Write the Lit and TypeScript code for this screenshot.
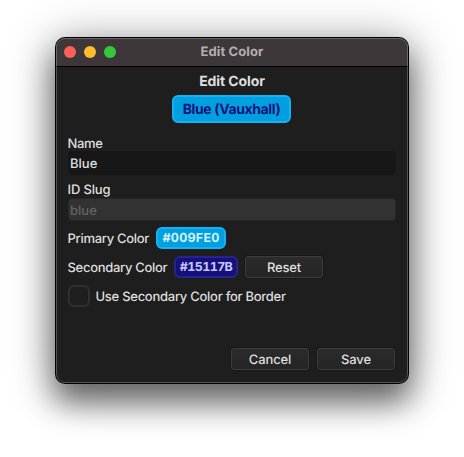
import { LitElement, html, css } from "lit";
import { customElement } from "lit/decorators.js";

@customElement("app-root")
export class AppRoot extends LitElement {
  static styles = css`
    :host {
      display: block;
      box-sizing: border-box;
      height: 457px;
      padding: 38px 56px 0;
      overflow: hidden;
      background: #fff;
      font: 500 13px/16px Inter, "Liberation Sans", sans-serif;
      text-rendering: geometricPrecision;
      color: #dfdfdf;
    }
    * { box-sizing: border-box; }
    .window {
      position: relative;
      display: flex;
      flex-direction: column;
      width: 352px;
      height: 345px;
      border-radius: 9px;
      background: #1e1e1e;
      box-shadow: 0 0 0 1px #000, 0 18px 30px 2px rgba(0, 0, 0, 0.5), 0 4px 46px 4px rgba(0, 0, 0, 0.3);
    }
    .window::after {
      content: "";
      position: absolute;
      inset: 0;
      border-radius: 9px;
      border: 1px solid rgba(255, 255, 255, 0.24);
      pointer-events: none;
    }
    .titlebar {
      display: grid;
      grid-template-columns: 1fr auto 1fr;
      align-items: center;
      height: 29px;
      padding: 0 8px;
      border-bottom: 1px solid #000;
      border-radius: 9px 9px 0 0;
      background: #3d3739;
      color: #b3b0b1;
    }
    .lights { display: flex; gap: 8px; }
    .light { width: 12px; height: 12px; border-radius: 50%; }
    .close { background: #ff5f57; }
    .min { background: #febc2e; }
    .max { background: #35c83c; }
    .title { font-weight: 700; font-size: 13px; letter-spacing: 0.12px; }
    .content {
      display: flex;
      flex-direction: column;
      flex: 1;
      padding: 5px 12px 13px 12px;
    }
    .heading {
      align-self: center;
      height: 18px;
      line-height: 20px;
      font-size: 14px;
      font-weight: 700;
      letter-spacing: -0.1px;
    }
    .preview {
      align-self: center;
      width: 119px;
      height: 28px;
      margin: 5px 0 12px -1px;
      border: 2px solid #15b2f5;
      border-radius: 6px;
      background: #009fe0;
      color: #15117b;
      font-size: 14px;
      font-weight: 700;
      line-height: 26px;
      letter-spacing: -0.37px;
      text-align: center;
      white-space: nowrap;
    }
    .label { height: 16px; line-height: 18px; margin-left: -0.5px; letter-spacing: -0.3px; white-space: nowrap; }
    .slug-label { line-height: 16px; letter-spacing: -0.15px; }
    .field {
      width: 328px;
      height: 24px;
      margin-bottom: 7px;
      padding: 0 2px;
      border-radius: 4px;
      background: #171717;
      line-height: 27px;
    }
    .slug {
      height: 23px;
      margin-bottom: 6px;
      border: 1px solid #262626;
      padding: 0 1px;
      background: #323232;
      color: #636363;
      line-height: 24px;
    }
    .row { display: flex; height: 22px; margin-bottom: 7px; }
    .row .label { line-height: 24px; height: 22px; }
    .swatch {
      height: 22px;
      border-radius: 6px;
      border: 2px solid;
      line-height: 19px;
      font-weight: 700;
      font-size: 12.5px;
      font-variant-numeric: tabular-nums;
      text-align: center;
    }
    .primary { width: 70px; margin-left: 7px; background: #009fe0; border-color: #15b2f5; color: #d4f1ff; letter-spacing: 0.25px; }
    .secondary { width: 64px; margin-left: 7px; background: #15117b; border-color: #28248c; color: #c8c6ff; letter-spacing: -0.6px; }
    .w1 { width: 81.5px; }
    .w2 { width: 99.5px; }
    .wide { letter-spacing: -0.27px; }
    .check { width: 22px; height: 22px; border: 2px solid #303030; border-radius: 6px; margin-right: 6px; }
    .button {
      width: 78px;
      height: 22px;
      border: 1px solid #3d3d3d;
      border-radius: 3px;
      background: linear-gradient(#2b2b2b, #252525);
      box-shadow: 0 0 0 1px #181818;
      line-height: 22px;
      letter-spacing: -0.15px;
      text-align: center;
    }
    .reset { margin-left: 7px; }
    .actions { display: flex; justify-content: flex-end; gap: 8px; margin-top: auto; padding-right: 1px; }
  `;

  render() {
    return html`
      <div class="window">
        <div class="titlebar">
          <div class="lights">
            <span class="light close"></span><span class="light min"></span><span class="light max"></span>
          </div>
          <span class="title">Edit Color</span>
        </div>
        <div class="content">
          <div class="heading">Edit Color</div>
          <div class="preview">Blue (Vauxhall)</div>
          <div class="label">Name</div>
          <div class="field">Blue</div>
          <div class="label slug-label">ID Slug</div>
          <div class="field slug">blue</div>
          <div class="row">
            <span class="label w1">Primary Color</span>
            <span class="swatch primary">#009FE0</span>
          </div>
          <div class="row">
            <span class="label w2">Secondary Color</span>
            <span class="swatch secondary">#15117B</span>
            <div class="button reset">Reset</div>
          </div>
          <div class="row">
            <span class="check"></span>
            <span class="label wide">Use Secondary Color for Border</span>
          </div>
          <div class="actions">
            <div class="button">Cancel</div>
            <div class="button">Save</div>
          </div>
        </div>
      </div>
    `;
  }
}
